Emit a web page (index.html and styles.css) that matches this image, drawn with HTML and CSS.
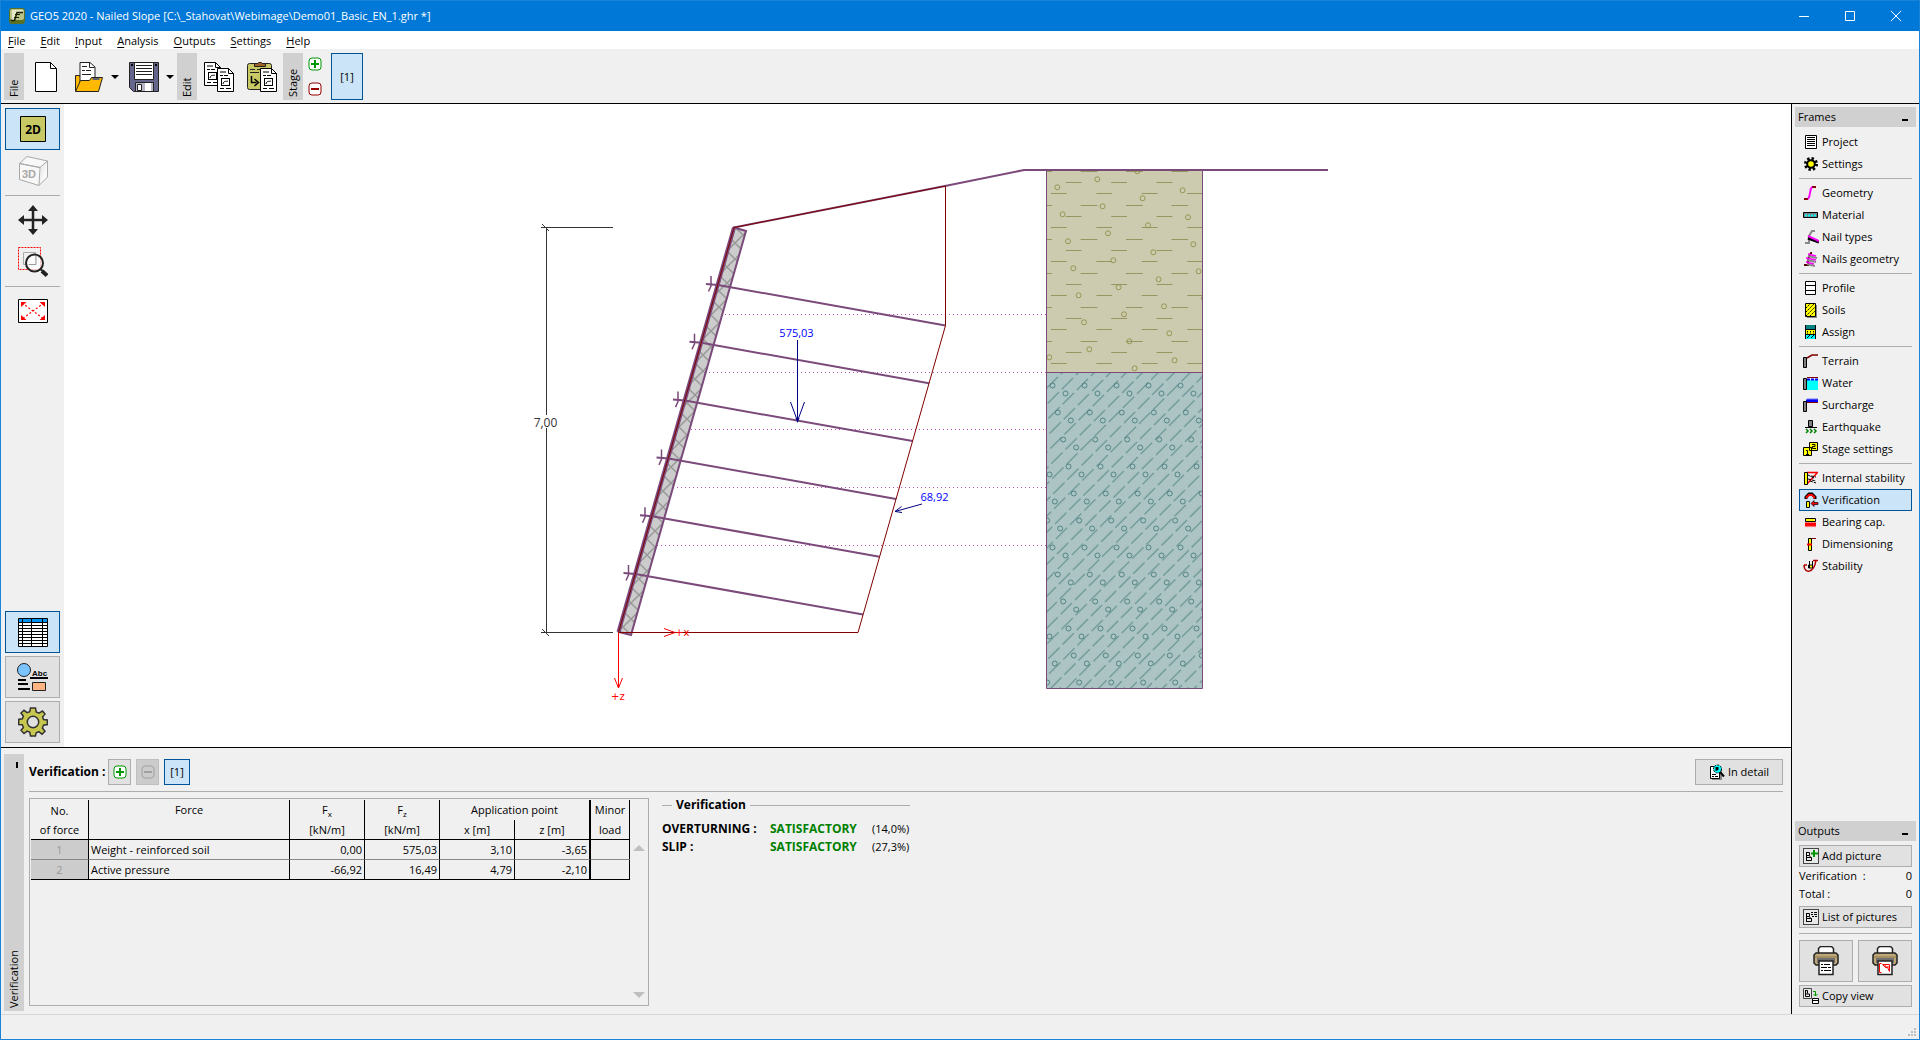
FILE: index.html
```html
<!DOCTYPE html>
<html lang="en">
<head>
<meta charset="utf-8">
<title>GEO5 2020 - Nailed Slope</title>
<link rel="stylesheet" href="styles.css">
</head>
<body>
<svg class="defs" width="0" height="0" aria-hidden="true">
  <defs>
    <g id="i-plus"><rect x="1" y="1" width="12" height="12" rx="3" fill="#fff" stroke="#009600"/><path d="M7 3v8M3 7h8" stroke="#009600" stroke-width="2"/></g>
    <g id="i-minus"><rect x="1" y="1" width="12" height="12" rx="3" fill="#fff" stroke="#960000"/><path d="M3 7h8" stroke="#960000" stroke-width="2"/></g>
    <g id="i-minus-off"><rect x="1" y="1" width="12" height="12" rx="3" fill="none" stroke="#a0a0a0"/><path d="M3 7h8" stroke="#a0a0a0" stroke-width="2"/></g>
    <g id="i-sheet"><path d="M.5 .5h11l5 5v18H.5z" fill="#fff" stroke="#000"/><path d="M11.500 .5v5h5" fill="none" stroke="#000"/><path d="M3 4h6M3 7.500h3M7 7.500h4M3 20.500h4M9 20.500h5" stroke="#000"/><rect x="4.500" y="10.500" width="8" height="7" fill="#fff" stroke="#000"/><path d="M6 16c1-4 3-2 5-3" stroke="#000" fill="none"/></g>
    <g id="i-printer"><path d="M5.500 9V2.500l2-2h11l2 2V9" fill="#fff" stroke="#222" stroke-width="1.500"/><path d="M1 9l2-2h20l2 2v8l-2 2H3l-2-2z" fill="#bfa878" stroke="#222" stroke-width="1.500"/><path d="M2 11h22" stroke="#8a7850"/><path d="M4 12h18v5H4z" fill="#707070"/><path d="M6 15h14v13.500H6z" fill="#fff" stroke="#222" stroke-width="1.500"/></g>
    <g id="i-pic"><rect x=".5" y=".5" width="15" height="15" fill="#e8e8e8" stroke="#444"/><path d="M3.500 4v9M3.500 4.500h3v3h-3M3.500 9.500h5v3h-5M6 7.500l2 2" fill="none" stroke="#000"/></g>
  </defs>
</svg>

<div class="window">
  <header class="titlebar">
    <svg class="app-icon" width="16" height="16" viewBox="0 0 16 16"><rect width="16" height="16" rx="3" fill="#5b7022"/><rect x="1" y="1" width="14" height="11" rx="2" fill="#b9c287"/><path d="M5 12L8 4h6V2H3v10z" fill="#e4e8c8"/><path d="M2 12.500h3.500L8 4.500h6" stroke="#1a2000" stroke-width="1.500" fill="none"/><path d="M6 6.500h5M5 9.500h5" stroke="#1a2000"/></svg>
    <h1 class="title">GEO5 2020 - Nailed Slope [C:\_Stahovat\Webimage\Demo01_Basic_EN_1.ghr *]</h1>
    <div class="win-buttons">
      <button class="win-btn" aria-label="Minimize"><svg width="10" height="10" viewBox="0 0 10 10"><path d="M0 5.500h10"/></svg></button>
      <button class="win-btn" aria-label="Maximize"><svg width="10" height="10" viewBox="0 0 10 10"><path d="M.5 .5h9v9h-9z"/></svg></button>
      <button class="win-btn" aria-label="Close"><svg width="10" height="10" viewBox="0 0 10 10"><path d="M0 0l10 10M10 0L0 10"/></svg></button>
    </div>
  </header>

  <nav class="menubar">
    <button><u>F</u>ile</button><button><u>E</u>dit</button><button><u>I</u>nput</button><button><u>A</u>nalysis</button><button><u>O</u>utputs</button><button><u>S</u>ettings</button><button><u>H</u>elp</button>
  </nav>

  <div class="toolbar">
    <span class="vtab">File</span>
    <button class="tool" aria-label="New"><svg width="30" height="30" viewBox="0 0 30 30"><path d="M4.500 .5h15l6 6v23h-21z" fill="#fff" stroke="#000"/><path d="M19.500 .5v6h6" fill="none" stroke="#000"/></svg></button>
    <button class="tool" aria-label="Open"><svg width="30" height="30" viewBox="0 0 30 30"><path d="M1.500 29V13.500h4l1 2h6" fill="#ffb900" stroke="#222"/><path d="M6 20L6 .5h10l5 4.500V20z" fill="#fff" stroke="#222"/><path d="M15.500 1v4.500h5" fill="none" stroke="#222"/><path d="M8 4.500h5M8 8.500h3M12 8.500h5M8 12.500h9" stroke="#222"/><path d="M1.500 29.500L6.500 18.500h9l2-3h11l-4 14z" fill="#ffb900" stroke="#222"/><path d="M18.500 17h7" stroke="#666" stroke-width="2"/></svg></button>
    <button class="drop" aria-label="Open recent"><svg width="8" height="4" viewBox="0 0 8 4"><path d="M0 0h8L4 4z"/></svg></button>
    <button class="tool" aria-label="Save"><svg width="30" height="30" viewBox="0 0 30 30"><path d="M.5 .5h29v29h-25l-4-4z" fill="#66668c" stroke="#222"/><path d="M5.500 .5h19v17h-19z" fill="#fff" stroke="#222"/><path d="M7 3.500h16M7 6.500h16M7 9.500h16M7 12.500h16" stroke="#222"/><path d="M2 3h2M26 3h2" stroke="#000" stroke-width="2"/><path d="M6.500 20.500h18v9h-18z" fill="#b8b8c8" stroke="#222"/><path d="M8.500 22.500h4v6h-4z" fill="#fff" stroke="#222"/><path d="M19 21v8" stroke="#fff" stroke-width="6"/></svg></button>
    <button class="drop" aria-label="Save options"><svg width="8" height="4" viewBox="0 0 8 4"><path d="M0 0h8L4 4z"/></svg></button>
    <span class="vtab">Edit</span>
    <button class="tool" aria-label="Copy"><svg width="30" height="30" viewBox="0 0 30 30"><use href="#i-sheet"/><use href="#i-sheet" x="13" y="6"/></svg></button>
    <button class="tool" aria-label="Paste"><svg width="30" height="30" viewBox="0 0 30 30"><rect x=".5" y="1.500" width="24" height="26" rx="2" fill="#c8c864" stroke="#222"/><path d="M7.500 1.500h3c1-1.500 4-1.500 5 0h3v3h-11z" fill="#a06428" stroke="#222"/><path d="M3 7.500h5M10 7.500h5M17 7.500h4M3 10.500h9" stroke="#222"/><path d="M4.500 14v6.500h5M7.500 17l4 3.500-4 3.500" fill="none" stroke="#000" stroke-width="1.500"/><use href="#i-sheet" x="13" y="6"/></svg></button>
    <span class="vtab">Stage</span>
    <div class="stage-btns">
      <button aria-label="Add stage"><svg width="14" height="14" viewBox="0 0 14 14"><use href="#i-plus"/></svg></button>
      <button aria-label="Remove stage"><svg width="14" height="14" viewBox="0 0 14 14"><use href="#i-minus"/></svg></button>
    </div>
    <button class="btn selected stage-one">[1]</button>
  </div>

  <div class="workspace">
    <main class="main">
      <div class="view">
        <div class="viewbar">
          <button class="btn selected side" aria-label="2D"><svg width="26" height="26" viewBox="0 0 26 26"><path d="M.5 .5h25v25H.5z" fill="#c8c864" stroke="#000"/><text class="t2d" x="13" y="18" text-anchor="middle">2D</text></svg></button>
          <button class="btn flat side" aria-label="3D"><svg width="30" height="30" viewBox="0 0 30 30"><path d="M1.500 7.500L9 .5l20.500 4.500-7.500 6.500zM1.500 7.500v16L21 29.500l1-18zM29.500 5v16L21 29.500" fill="#f8f8f8" stroke="#a8a8a8"/><text class="t3d" x="11" y="22" text-anchor="middle">3D</text></svg></button>
          <hr>
          <button class="btn flat side" aria-label="Pan"><svg width="30" height="30" viewBox="0 0 30 30"><path d="M15 4v22M4 15h22" stroke="#222" stroke-width="2.500"/><path d="M15 0l5 6H10zM15 30l5-6H10zM0 15l6-5v10zM30 15l-6-5v10z" fill="#222"/></svg></button>
          <button class="btn flat side" aria-label="Zoom"><svg width="30" height="30" viewBox="0 0 30 30"><path d="M5.500 5.500h12v12h-12z" fill="none" stroke="#aaa"/><path d="M.5 .5h22v22H.5z" fill="none" stroke="#f00" stroke-dasharray="2 1"/><circle cx="16.500" cy="16" r="8.500" fill="#fff" fill-opacity=".7" stroke="#222" stroke-width="2"/><path d="M11 17.500h7v-9" fill="none" stroke="#999"/><path d="M22.500 22l2 2" stroke="#222" stroke-width="2"/><path d="M24 24l5 4.500" stroke="#222" stroke-width="4"/></svg></button>
          <hr>
          <button class="btn flat side" aria-label="Fit"><svg width="30" height="24" viewBox="0 0 30 24"><path d="M.5 .5h29v23H.5z" fill="#fff" stroke="#000"/><path d="M4 4l22 16M26 4L4 20" stroke="#f00" stroke-width="1.200" stroke-dasharray="2 2"/><path d="M3 3h5.500L3 8zM27 3h-5.500L27 8zM3 21h5.500L3 16zM27 21h-5.500L27 16z" fill="#f00"/></svg></button>
          <div class="viewbar-bottom">
            <button class="btn selected side" aria-label="Tables"><svg width="30" height="29" viewBox="0 0 30 29"><path d="M.5 .5h29v28H.5z" fill="#fff" stroke="#000"/><path d="M1 1h28v3H1z" fill="#0090f0"/><path d="M1 4.500h28M1 7.500h28M1 10.500h28M1 13.500h28M1 16.500h28M1 19.500h28M1 22.500h28M1 25.500h28M4.500 1v27M13.500 1v27M24.500 1v27" stroke="#000"/></svg></button>
            <button class="btn side" aria-label="Legend"><svg width="31" height="28" viewBox="0 0 31 28"><circle cx="7" cy="7" r="6.500" fill="#7cc4ff" stroke="#222"/><text class="tabc" x="15" y="13">Abc</text><path d="M13 15h18M1 17h8M1 21h10M1 26h12" stroke="#000" stroke-width="2"/><path d="M15.500 19.500h13v8h-13z" fill="#ffb482" stroke="#222"/></svg></button>
            <button class="btn side" aria-label="Settings"><svg width="30" height="30" viewBox="0 0 30 30"><path d="M12.500 1h5l.7 4 2.800 1.200L24.500 4 27 7l-2.400 2.800L25.500 12.500l3.800.5v4.500l-3.800.7-1.100 2.800 2.600 3.200-3 3-3.200-2.500-2.600 1L17.500 29h-5l-.7-3.800-2.700-1.100L6 26.500 3 23.300l2.400-2.800-1.100-2.700L.7 17.500v-5l3.600-.7 1.100-2.600L3 6l3-2.700 3 2.400 2.800-1z" fill="#c8c850" stroke="#333" stroke-width="1.500"/><circle cx="15" cy="15" r="5.700" fill="#e1e1e1" stroke="#333" stroke-width="1.500"/></svg></button>
          </div>
        </div>

        <svg class="drawing" viewBox="64 104 1727 643">
          <defs>
            <pattern id="p-wall" width="16" height="16" x="735" y="243" patternUnits="userSpaceOnUse"><rect width="16" height="16" fill="#ccc"/><path d="M-1-1l18 18M17-1L-1 17" stroke="#999" stroke-width="1.500"/></pattern>
            <pattern id="p-clay" width="45.400" height="34" x="1051" y="171" patternUnits="userSpaceOnUse"><rect width="46" height="34" fill="#cccbb0"/><path d="M30 .5h15.400M0 .5h1M15 11.500h16M0 22.500h16" stroke="#969660" shape-rendering="crispEdges"/></pattern>
            <pattern id="p-silt" width="22.620" height="40" patternUnits="userSpaceOnUse" patternTransform="translate(1054 373) rotate(45)"><rect width="23" height="40" fill="#adc4c4"/><path d="M5.600 0v16M5.600 20v16M17 0v6M17 10v16M17 30v10" stroke="#568686"/></pattern>
            <clipPath id="c-clay"><path d="M1047 171h155v201h-155z"/></clipPath>
            <clipPath id="c-silt"><path d="M1047 373h155v315h-155z"/></clipPath>
            <g id="row-clay" fill="none" stroke="#969650"><circle cx="977.300" cy="203.300" r="2.500"/><circle cx="1017.300" cy="195.300" r="2.500"/><circle cx="1057.300" cy="187.300" r="2.500"/><circle cx="1097.300" cy="179.300" r="2.500"/><circle cx="1137.300" cy="171.300" r="2.500"/><circle cx="1177.300" cy="163.300" r="2.500"/></g>
            <g id="pair-silt" fill="none" stroke="#508484"><circle cx="1052.500" cy="385.500" r="2.500"/><circle cx="1065.500" cy="393.500" r="2.500"/></g>
            <g id="row-silt"><use href="#pair-silt" x="-96"/><use href="#pair-silt" x="-64"/><use href="#pair-silt" x="-32"/><use href="#pair-silt"/><use href="#pair-silt" x="32"/><use href="#pair-silt" x="64"/><use href="#pair-silt" x="96"/><use href="#pair-silt" x="128"/></g>
            <g id="nail" fill="none" stroke="#7b4a7b" stroke-width="2"><path d="M706 284l12 1 227.500 40.500"/><path d="M711 276v10l-2.500 5.500" stroke-width="1.500"/></g>
          </defs>

          <path d="M1046.500 170h156v202.500h-156z" fill="url(#p-clay)"/>
          <g clip-path="url(#c-clay)">
            <use href="#row-clay"/><use href="#row-clay" x="5.300" y="27"/><use href="#row-clay" x="10.700" y="54"/><use href="#row-clay" x="16" y="81"/><use href="#row-clay" x="21.300" y="108"/><use href="#row-clay" x="26.700" y="135"/><use href="#row-clay" x="32" y="162"/><use href="#row-clay" x="37.300" y="189"/><use href="#row-clay" x="42.700" y="216"/>
          </g>
          <path d="M1046.500 372.500h156v316h-156z" fill="url(#p-silt)"/>
          <g clip-path="url(#c-silt)">
            <use href="#row-silt"/><use href="#row-silt" x="5.300" y="27"/><use href="#row-silt" x="10.700" y="54"/><use href="#row-silt" x="16" y="81"/><use href="#row-silt" x="21.300" y="108"/><use href="#row-silt" x="26.700" y="135"/><use href="#row-silt" x="32" y="162"/><use href="#row-silt" x="37.300" y="189"/><use href="#row-silt" x="42.700" y="216"/><use href="#row-silt" x="48" y="243"/><use href="#row-silt" x="53.300" y="270"/><use href="#row-silt" x="58.700" y="297"/>
          </g>
          <path d="M1046.500 170v518.500h156V170M1046.500 372.500h156" fill="none" stroke="#7b4a7b"/>

          <path d="M713 314.500h333M697 372.500h349M691 429.500h355M673 487.500h373M657 545.500h389" stroke="#c050c0" stroke-dasharray="1 3"/>

          <path d="M734 227.500l12 3.500-115 404-12-3z" fill="url(#p-wall)" stroke="#7b4a7b" stroke-width="2"/>
          <path d="M734 227.500l211-41.500 79-16h304" fill="none" stroke="#7b4a7b" stroke-width="2"/>
          <path d="M734 227.500L618.500 632" stroke="#7b4a7b" stroke-width="4"/>
          <use href="#nail"/><use href="#nail" x="-16.500" y="57.800"/><use href="#nail" x="-33" y="115.600"/><use href="#nail" x="-49.500" y="173.400"/><use href="#nail" x="-66" y="231.200"/><use href="#nail" x="-82.500" y="289"/>
          <path d="M618.500 632.500L734 227.500l211.500-41.500v139.500l-87.500 307z" fill="none" stroke="#800000"/>

          <path d="M546.500 227v405M541 227.500h72M541 632.500h72M542 224l7 7M542 629l7 7" stroke="#333" fill="none"/>
          <rect x="532" y="415" width="28" height="13" fill="#fff"/>
          <text class="dim" x="545.500" y="427" text-anchor="middle">7,00</text>

          <path d="M797.500 340v80M790.500 402l7 19 7-19" stroke="#000080" fill="none"/><path d="M795.500 418h4l-2 5z" fill="#000080"/>
          <path d="M922 504l-27 7.500M901.500 506.500l-6.500 5 7 1" stroke="#000080" fill="none"/>
          <text class="force" x="796.500" y="337" text-anchor="middle">575,03</text>
          <text class="force" x="934.500" y="501" text-anchor="middle">68,92</text>

          <g stroke="#f00" fill="none"><path d="M618.500 633v55M614.500 678l4 10 4-10"/><path d="M664 628.500l11 4-11 4"/></g>
          <text class="axis" x="675" y="636">+x</text>
          <text class="axis" x="611" y="700">+z</text>
        </svg>
      </div>

      <section class="panel">
        <div class="vtab panel-tab"><span>Verification</span></div>
        <div class="panel-body">
          <div class="panel-head">
            <h2 class="panel-title">Verification&nbsp;:</h2>
            <button class="btn small" aria-label="Add verification"><svg width="14" height="14" viewBox="0 0 14 14"><use href="#i-plus"/></svg></button>
            <button class="btn small" disabled aria-label="Remove verification"><svg width="14" height="14" viewBox="0 0 14 14"><use href="#i-minus-off"/></svg></button>
            <button class="btn selected one">[1]</button>
            <button class="btn detail"><svg width="16" height="16" viewBox="0 0 16 16"><path d="M3 4h10v12H3z" fill="#888"/><path d="M1.500 2.500h9v12h-9z" fill="#fff" stroke="#000"/><path d="M3 10.500h4M3 12.500h2M6 12.500h3" stroke="#000"/><circle cx="8.500" cy="5" r="4" fill="#0ff" stroke="#000" stroke-dasharray="2 1"/><path d="M6.500 3v4l3-1V3z" fill="#000"/><path d="M11 8l4 4.500" stroke="#000" stroke-width="2"/></svg>In detail</button>
          </div>
          <div class="panel-content">
            <div class="table-box">
              <table class="forces">
                <colgroup><col class="c-no"><col class="c-force"><col class="c-num"><col class="c-num"><col class="c-num"><col class="c-z"><col class="c-minor"></colgroup>
                <thead>
                  <tr><th rowspan="2">No.<br>of force</th><th class="top">Force</th><th class="top">F<sub>x</sub></th><th class="top">F<sub>z</sub></th><th class="top thick" colspan="2">Application point</th><th class="top">Minor</th></tr>
                  <tr><th></th><th>[kN/m]</th><th>[kN/m]</th><th>x [m]</th><th class="thick">z [m]</th><th>load</th></tr>
                </thead>
                <tbody>
                  <tr><th class="no">1</th><td class="name">Weight - reinforced soil</td><td>0,00</td><td>575,03</td><td>3,10</td><td class="thick">-3,65</td><td></td></tr>
                  <tr><th class="no">2</th><td class="name">Active pressure</td><td>-66,92</td><td>16,49</td><td>4,79</td><td class="thick">-2,10</td><td></td></tr>
                </tbody>
              </table>
              <div class="scroll"><svg width="12" height="6" viewBox="0 0 12 6"><path d="M6 0l6 6H0z"/></svg><svg width="12" height="6" viewBox="0 0 12 6"><path d="M0 0h12L6 6z"/></svg></div>
            </div>
            <div class="results">
              <h3 class="group-title"><span>Verification</span></h3>
              <dl class="result-list">
                <dt>OVERTURNING :</dt><dd class="ok">SATISFACTORY</dd><dd>(14,0%)</dd>
                <dt>SLIP :</dt><dd class="ok">SATISFACTORY</dd><dd>(27,3%)</dd>
              </dl>
            </div>
          </div>
        </div>
      </section>
    </main>

    <aside class="frames">
      <h2 class="side-head">Frames<span class="fold"></span></h2>
      <nav class="group">
        <button class="item"><svg width="16" height="16" viewBox="0 0 16 16"><path d="M2.500 1.500h11v13h-11z" fill="#fff" stroke="#000"/><path d="M4 3.500h8M4 5.500h8M4 7.500h8M4 9.500h8M4 11.500h8" stroke="#000"/></svg>Project</button>
        <button class="item"><svg width="16" height="16" viewBox="0 0 16 16"><circle cx="8" cy="8" r="5.500" fill="none" stroke="#000" stroke-width="3" stroke-dasharray="2.300 2"/><circle cx="8" cy="8" r="3.800" fill="#ff0" stroke="#000" stroke-width="2"/></svg>Settings</button>
        <hr>
        <button class="item"><svg width="16" height="16" viewBox="0 0 16 16"><path d="M1 14h4M9 2h4" stroke="#800000" stroke-width="2"/><path d="M5 14c3-3 1-9 4-12" fill="none" stroke="#f0f" stroke-width="2"/></svg>Geometry</button>
        <button class="item"><svg width="16" height="16" viewBox="0 0 16 16"><path d="M.5 5.500h14v5H.5z" fill="#808080" stroke="#000"/><path d="M2 8.500h11" stroke="#0ff" stroke-width="2" stroke-dasharray="2 1"/></svg>Material</button>
        <button class="item"><svg width="16" height="16" viewBox="0 0 16 16"><path d="M2 14h4V7l3-5h3" fill="none" stroke="#888" stroke-width="2"/><path d="M5 9l11 4" stroke="#000" stroke-width="3"/><path d="M5 7l11 5" stroke="#f0f" stroke-width="2"/></svg>Nail types</button>
        <button class="item"><svg width="16" height="16" viewBox="0 0 16 16"><path d="M1 14h4V8l3-6h1" fill="none" stroke="#500" stroke-width="2"/><path d="M5 5l9 2M4 9l9 2M4 13l8 2" stroke="#888" stroke-width="2"/><path d="M5 3l8 2M3 7l10 2M3 11l8 2" stroke="#f0f" stroke-width="1.500"/></svg>Nails geometry</button>
        <hr>
        <button class="item"><svg width="16" height="16" viewBox="0 0 16 16"><path d="M2.500 1.500h10v13h-10zM3 5.500h9M3 10.500h9" fill="#fff" stroke="#000"/></svg>Profile</button>
        <button class="item"><svg width="16" height="16" viewBox="0 0 16 16"><path d="M4 3h10v13H4z" fill="#888"/><path d="M2.500 1.500h10v13h-10z" fill="#ff0" stroke="#000"/><path d="M3 6l4-4M3 10l8-8M3 14l9-9M7 14l5-5" stroke="#000" stroke-dasharray="2 1"/></svg>Soils</button>
        <button class="item"><svg width="16" height="16" viewBox="0 0 16 16"><path d="M2 1h11v4H2z" fill="#008080"/><path d="M2 5h11v5H2z" fill="#ff0"/><path d="M2 10h11v5H2z" fill="#0ff"/><path d="M2.500 1v14M12.500 1v14M2 5.500h11M2 10.500h11" stroke="#000"/><path d="M4 7.500h8M4 9h7" stroke="#000" stroke-dasharray="1 2"/><path d="M4 14l3-3M8 14l3-3" stroke="#000"/></svg>Assign</button>
        <hr>
        <button class="item"><svg width="16" height="16" viewBox="0 0 16 16"><path d="M.5 4.500h3v10h-3z" fill="#808080" stroke="#000"/><path d="M4 5l5-3h6" fill="none" stroke="#800000" stroke-width="1.500"/></svg>Terrain</button>
        <button class="item"><svg width="16" height="16" viewBox="0 0 16 16"><path d="M4 5h11v10H4z" fill="#0ff"/><path d="M4 4.500h11" stroke="#00f" stroke-width="2" stroke-dasharray="3 1"/><path d="M4 2.500h11" stroke="#800000"/><path d="M.5 3.500h3v11h-3z" fill="#808080" stroke="#000"/></svg>Water</button>
        <button class="item"><svg width="16" height="16" viewBox="0 0 16 16"><path d="M4 5.500h11" stroke="#800000"/><path d="M3 2l1 1 1-2 1 2 1-2 1 2 1-2 1 2 1-2 1 2 1-2 1 2 1-2v4H3z" fill="#00f"/><path d="M.5 4.500h3v10h-3z" fill="#808080" stroke="#000"/></svg>Surcharge</button>
        <button class="item"><svg width="16" height="16" viewBox="0 0 16 16"><path d="M5.500 1.500h4v6h-4z" fill="#808080" stroke="#000"/><path d="M2 8.500h12" stroke="#000"/><path d="M3 10l2 2-2 2M7 10l2 2-2 2M11 10l2 2-2 2" fill="none" stroke="#008000" stroke-width="1.500"/></svg>Earthquake</button>
        <button class="item"><svg width="16" height="16" viewBox="0 0 16 16"><path d="M6.500 1.500h8v8h-8zM.5 6.500h8v8h-8z" fill="#ff0" stroke="#000"/><path d="M9 3.500h3v2H9.500v2H13M3 9.500h1.500v4M3 13.500h3" fill="none" stroke="#000"/></svg>Stage settings</button>
        <hr>
        <button class="item"><svg width="16" height="16" viewBox="0 0 16 16"><path d="M4 2.500h11M4 14l10-11" stroke="#f00" stroke-width="1.500"/><path d="M1.500 2.500h3v12h-3z" fill="#ff0" stroke="#000"/><path d="M5 5l6 3M5 9l8 2M8 6l5 1M7 11l6 2" stroke="#000" stroke-dasharray="3 1"/></svg>Internal stability</button>
        <button class="item current"><svg width="16" height="16" viewBox="0 0 16 16"><path d="M3 7V5l3-3h3l3 3v2" fill="none" stroke="#000" stroke-width="3"/><path d="M3 6l3-3h3l3 3" fill="none" stroke="#f00" stroke-width="2"/><path d="M3.500 9.500h3v6h-3z" fill="#ff0" stroke="#000"/><path d="M8 11.500l3-3v2h4v2h-4v2z" fill="#f00" stroke="#000" stroke-width=".7"/></svg>Verification</button>
        <button class="item"><svg width="16" height="16" viewBox="0 0 16 16"><path d="M2.500 4.500h10v3h-10z" fill="#ff0" stroke="#000"/><path d="M2 8.500h11v3l-1 2-1-2-1 2-1-2-1 2-1-2-1 2-1-2-1 2-1-2-1 2z" fill="#f00"/></svg>Bearing cap.</button>
        <button class="item"><svg width="16" height="16" viewBox="0 0 16 16"><path d="M8 2.500h5" stroke="#800000"/><path d="M5.500 2.500h3v12h-3z" fill="#ff0" stroke="#000"/><path d="M4 8.500h5" stroke="#f00" stroke-width="2"/></svg>Dimensioning</button>
        <button class="item"><svg width="16" height="16" viewBox="0 0 16 16"><path d="M6.500 3v7M9.500 3v4H5.500v3h4V3.500z" fill="#ff0" stroke="#000"/><path d="M1 7c0 9 10 9 12-5M1 7h3M10 2.500h5" fill="none" stroke="#b00000" stroke-width="1.500"/></svg>Stability</button>
      </nav>
      <section class="outputs">
        <h2 class="side-head">Outputs<span class="fold"></span></h2>
        <div class="group">
          <button class="item raised"><svg width="16" height="16" viewBox="0 0 16 16"><use href="#i-pic"/><path d="M11 2v7M8 5.500h7" stroke="#009600" stroke-width="2"/></svg>Add picture</button>
          <p class="count"><span>Verification&nbsp; :</span><span>0</span></p>
          <p class="count"><span>Total :</span><span>0</span></p>
          <button class="item raised"><svg width="16" height="16" viewBox="0 0 16 16"><use href="#i-pic"/><path d="M8 3.500h2M11 3.500h3M8 5.500h2M11 5.500h3M9 7.500h2M12 7.500h2" stroke="#000"/></svg>List of pictures</button>
          <hr>
          <div class="printers">
            <button class="btn" aria-label="Print document"><svg width="26" height="30" viewBox="0 0 26 30"><use href="#i-printer"/><path d="M8 18.500h2M11 18.500h6M8 21.500h6M15 21.500h3M8 24.500h2M11 24.500h7" stroke="#000"/></svg></button>
            <button class="btn" aria-label="Print picture"><svg width="26" height="30" viewBox="0 0 26 30"><use href="#i-printer"/><path d="M9.500 17.500h-2v9h2M10.500 18.500h7v7l-2-4h-2zM13 18v3h5" fill="none" stroke="#f00"/></svg></button>
          </div>
          <button class="item raised"><svg width="16" height="16" viewBox="0 0 16 16"><path d="M.5 .5h8v10h-8z" fill="#e8e8e8" stroke="#444"/><path d="M2.500 2v6.500h4v-2.500h-4M2.500 2.500h2v3" fill="none" stroke="#000"/><path d="M10 3.500h2.500V8M10.500 6l2 2 2-2" fill="none" stroke="#009600"/><path d="M9.500 10.500h6v5h-6zM10 12.500h5" fill="#fff" stroke="#000"/></svg>Copy view</button>
        </div>
      </section>
    </aside>
  </div>

  <footer class="statusbar"><svg width="9" height="9" viewBox="0 0 9 9"><path d="M6 0h2v2H6zM3 3h2v2H3zM6 3h2v2H6zM0 6h2v2H0zM3 6h2v2H3zM6 6h2v2H6z" fill="#bfbfbf"/></svg></footer>
</div>
</body>
</html>
```

FILE: styles.css
```css
* { box-sizing: border-box; }

:root {
  --face: #f0f0f0;
  --head: #d0d0d0;
  --line: #adadad;
  --sel: #cce4f7;
  --sel-line: #005499;
}

body {
  margin: 0;
  font: 11px/16px "Open Sans", "Noto Sans", sans-serif;
  color: #000;
}

h1, h2, h3, p, dl, dd { margin: 0; font: inherit; }

button {
  margin: 0;
  padding: 0;
  border: 0;
  background: none;
  color: inherit;
  font: inherit;
}

svg { display: block; flex: none; }
hr { margin: 3px 0; border: 0; border-top: 1px solid var(--line); }
.defs { position: absolute; }

.window {
  display: flex;
  flex-direction: column;
  min-height: 100vh;
  border: 1px solid #1883d7;
  background: var(--face);
}

/* Title bar and menu */
.titlebar {
  display: flex;
  align-items: center;
  height: 30px;
  padding-left: 8px;
  gap: 5px;
  background: #0078d7;
  color: #fff;
}
.title { flex: 1; }
.win-buttons { display: flex; align-self: stretch; }
.win-btn { display: grid; place-items: center; width: 46px; }
.win-btn path { fill: none; stroke: #fff; }

.menubar {
  display: flex;
  gap: 15px;
  height: 18px;
  padding: 1px 7px 0;
  background: #fff;
}
.menubar button { line-height: 18px; }
.menubar u { text-underline-offset: 2px; }

/* Toolbar */
.toolbar {
  display: flex;
  height: 55px;
  padding: 4px 3px 3px;
  border-bottom: 1px solid #000;
}
.vtab {
  width: 20px;
  padding: 3px 0;
  background: var(--head);
  writing-mode: vertical-rl;
  transform: rotate(180deg);
  line-height: 20px;
}
.tool { display: flex; align-items: center; width: 43px; padding-left: 7px; }
.drop { display: flex; align-items: center; width: 12px; padding-left: 1px; }
.stage-btns {
  display: flex;
  flex-direction: column;
  justify-content: space-between;
  padding: 4px 9px 4px 5px;
}

.btn {
  display: flex;
  align-items: center;
  justify-content: center;
  border: 1px solid var(--line);
  background: #e1e1e1;
}
.btn.selected { border-color: var(--sel-line); background: var(--sel); }
.btn.flat { border-color: transparent; background: none; }
.btn:disabled { border-color: #bfbfbf; background: #ccc; }
.stage-one { width: 32px; }

/* Work area */
.workspace { display: flex; flex: 1; }
.main { display: flex; flex: 1; flex-direction: column; min-width: 0; }
.view { display: flex; flex: 1; background: #fff; }
.viewbar {
  display: flex;
  flex-direction: column;
  width: 63px;
  padding: 4px;
  background: var(--face);
}
.side { width: 55px; height: 42px; }
.viewbar hr { width: 55px; }
.viewbar-bottom { display: grid; gap: 3px; margin-top: auto; }

.drawing { flex: 1; min-width: 0; width: 100%; height: 100%; }
.drawing .dim { font-size: 12px; fill: #333; }
.drawing .force { font-size: 11px; fill: #00f; }
.drawing .axis { font: 10px "DejaVu Sans", sans-serif; fill: #f00; }
.t2d { font: bold 12px "Open Sans", sans-serif; }
.t3d { font: bold 11px "Liberation Sans", sans-serif; fill: #a8a8a8; }
.tabc { font: bold 8px "Liberation Sans", sans-serif; }

/* Verification panel */
.panel {
  display: flex;
  gap: 5px;
  min-height: 267px;
  padding: 6px 8px 3px 3px;
  border-top: 1px solid #000;
}
.panel-tab::after {
  content: "";
  position: absolute;
  left: 6px;
  bottom: 8px;
  width: 2px;
  height: 6px;
  background: #000;
}
.panel-body { display: flex; flex: 1; flex-direction: column; min-width: 0; }
.panel-head {
  display: flex;
  align-items: center;
  gap: 5px;
  padding: 5px 0 6px;
  border-bottom: 1px solid var(--line);
}
.panel-title { width: 74px; font-size: 12px; font-weight: bold; white-space: nowrap; }
.panel-head .btn { height: 26px; }
.small { width: 23px; }
.one { width: 26px; }
.detail { gap: 3px; width: 88px; margin-left: auto; }

.panel-content { display: flex; flex: 1; gap: 13px; padding: 6px 0 5px; }
.table-box {
  display: flex;
  width: 620px;
  padding: 1px;
  border: 1px solid var(--line);
}
.forces {
  align-self: flex-start;
  width: 599px;
  table-layout: fixed;
  border-spacing: 0;
  line-height: 19px;
}
.c-no { width: 58px; }
.c-force { width: 201px; }
.c-num { width: 75px; }
.c-z { width: 76px; }
.c-minor { width: 39px; }
.forces th, .forces td {
  height: 20px;
  padding: 0;
  border: solid #000;
  border-width: 0 1px 1px 0;
  font-weight: normal;
  white-space: nowrap;
}
.forces .top { border-bottom: 0; vertical-align: top; }
.forces .thick { border-right-width: 2px; }
.forces td { padding: 0 2px; text-align: right; }
.forces .name { text-align: left; }
.forces .no { background: #ccc; color: #999; }
.forces tbody tr:first-child > * { border-bottom-color: #888; }
.forces sub { font-size: 8px; line-height: 1px; }
.scroll {
  display: flex;
  flex: 1;
  flex-direction: column;
  align-items: center;
  justify-content: space-between;
  padding: 45px 0 6px;
}
.scroll path { fill: #bfbfbf; }

.results { width: 248px; }
.group-title {
  display: flex;
  align-items: center;
  gap: 4px;
  font-size: 12px;
  font-weight: bold;
  line-height: 14px;
}
.group-title::before, .group-title::after {
  content: "";
  width: 10px;
  border-top: 1px solid var(--line);
}
.group-title::after { flex: 1; }
.result-list {
  display: grid;
  grid-template-columns: 108px 102px auto;
  margin-top: 8px;
  line-height: 18px;
}
.result-list dt, .ok { font-size: 12px; font-weight: bold; }
.ok { color: #008000; }

/* Frames and outputs */
.frames {
  display: flex;
  flex-direction: column;
  width: 128px;
  padding: 3px;
  border-left: 1px solid #000;
}
.side-head {
  position: relative;
  padding: 2px 3px;
  background: var(--head);
}
.fold {
  position: absolute;
  right: 8px;
  bottom: 6px;
  width: 6px;
  height: 2px;
  background: #000;
}
.group { display: flex; flex-direction: column; padding: 4px; }
.item {
  display: flex;
  align-items: center;
  gap: 3px;
  height: 22px;
  padding: 0 3px;
  border: 1px solid transparent;
  text-align: left;
  white-space: nowrap;
}
.item.current { border-color: var(--sel-line); background: var(--sel); }
.item.raised { border-color: var(--line); background: #e1e1e1; }
.outputs { margin-top: auto; }
.count { display: flex; justify-content: space-between; line-height: 18px; }
.outputs .count + .item { margin-top: 3px; }
.outputs hr { margin: 5px 0 6px; }
.printers { display: flex; gap: 5px; margin-bottom: 3px; }
.printers .btn { flex: 1; height: 42px; }

.statusbar {
  display: flex;
  align-items: flex-end;
  justify-content: flex-end;
  height: 25px;
  padding: 2px;
  border-top: 1px solid #d7d7d7;
}
```
